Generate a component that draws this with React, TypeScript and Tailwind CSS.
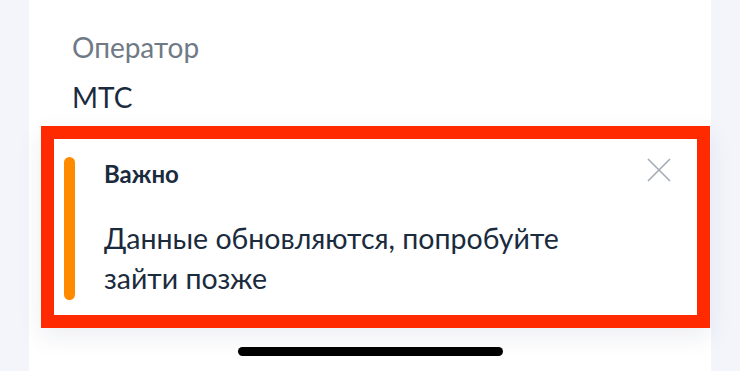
export default function App() {
  return (
    <div
      className="w-[740px] h-[371px] overflow-hidden bg-[#f3f5fb] flex justify-center"
      style={{ fontFamily: 'Lato, "Noto Sans", sans-serif' }}
    >
      <div className="w-[682px] h-full bg-white flex flex-col">
        <div className="pt-[29px] pl-[43px]">
          <div className="text-[28px] leading-[36px] text-[#6f7a86]">Оператор</div>
          <div className="mt-[14px] text-[28px] leading-[36px] text-[#1b2b3e]">МТС</div>
        </div>

        <div className="mt-[11px] ml-[12px] w-[669px] border-[13px] border-[#ff2a00] bg-white shadow-[0_8px_24px_rgba(20,40,90,0.08)]">
          <div className="flex h-[176px] pl-[10px] pr-[26px] pt-[18px]">
            <div className="w-[11px] h-[143px] rounded-full bg-[#ff8a00] shrink-0" />
            <div className="flex-1 pl-[29px]">
              <div className="text-[24px] font-bold leading-[24px] text-[#1b2b3e] mt-[5px]">Важно</div>
              <div className="mt-[32px] text-[28.5px] leading-[40px] text-[#1b2b3e] w-[490px]">
                Данные обновляются, попробуйте зайти позже
              </div>
            </div>
            <svg width="24" height="24" viewBox="0 0 24 24" className="mt-[1px] shrink-0">
              <path d="M1 1L23 23M23 1L1 23" stroke="#a3abb4" strokeWidth="1.6" />
            </svg>
          </div>
        </div>

        <div className="flex-1 flex justify-center">
          <div className="mt-[19px] w-[265px] h-[9px] rounded-full bg-black" />
        </div>
      </div>
    </div>
  );
}
